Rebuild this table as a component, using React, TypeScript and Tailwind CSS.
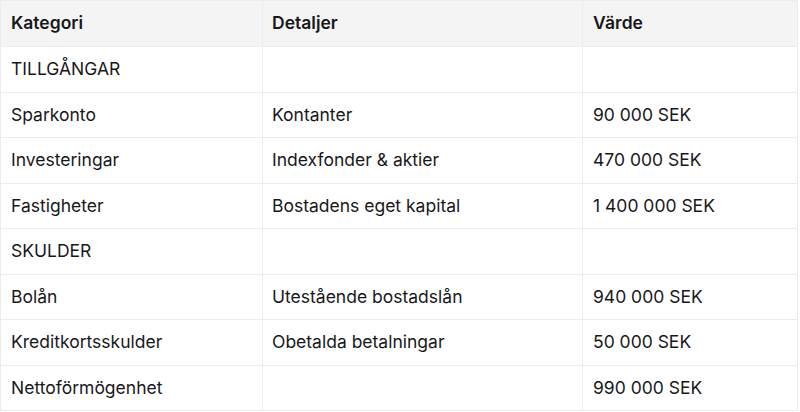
import React from "react";

const rows: [string, string, string][] = [
  ["TILLGÅNGAR", "", ""],
  ["Sparkonto", "Kontanter", "90 000 SEK"],
  ["Investeringar", "Indexfonder & aktier", "470 000 SEK"],
  ["Fastigheter", "Bostadens eget kapital", "1 400 000 SEK"],
  ["SKULDER", "", ""],
  ["Bolån", "Utestående bostadslån", "940 000 SEK"],
  ["Kreditkortsskulder", "Obetalda betalningar", "50 000 SEK"],
  ["Nettoförmögenhet", "", "990 000 SEK"],
];

export default function App() {
  return (
    <div className="w-[800px] h-[412px] bg-white" style={{ fontFamily: "Inter, 'Noto Sans', sans-serif" }}>
      <table className="w-[798px] border-collapse border border-[#ececef] text-[17.5px] text-[#18181b] table-fixed">
        <colgroup>
          <col className="w-[262px]" />
          <col className="w-[320px]" />
          <col />
        </colgroup>
        <thead>
          <tr className="h-[46px] bg-[#f4f4f5]">
            <th className="border border-[#ececef] pl-2.5 pr-2 text-left font-semibold">Kategori</th>
            <th className="border border-[#ececef] pl-[9px] pr-2 text-left font-semibold">Detaljer</th>
            <th className="border border-[#ececef] pl-2.5 pr-2 text-left font-semibold">Värde</th>
          </tr>
        </thead>
        <tbody>
          {rows.map((r, i) => (
            <tr key={i} className="h-[45.5px]">
              <td className="border border-[#ececef] pl-2.5 pr-2">{r[0]}</td>
              <td className="border border-[#ececef] pl-[9px] pr-2">{r[1]}</td>
              <td className="border border-[#ececef] pl-2.5 pr-2">{r[2]}</td>
            </tr>
          ))}
        </tbody>
      </table>
    </div>
  );
}
